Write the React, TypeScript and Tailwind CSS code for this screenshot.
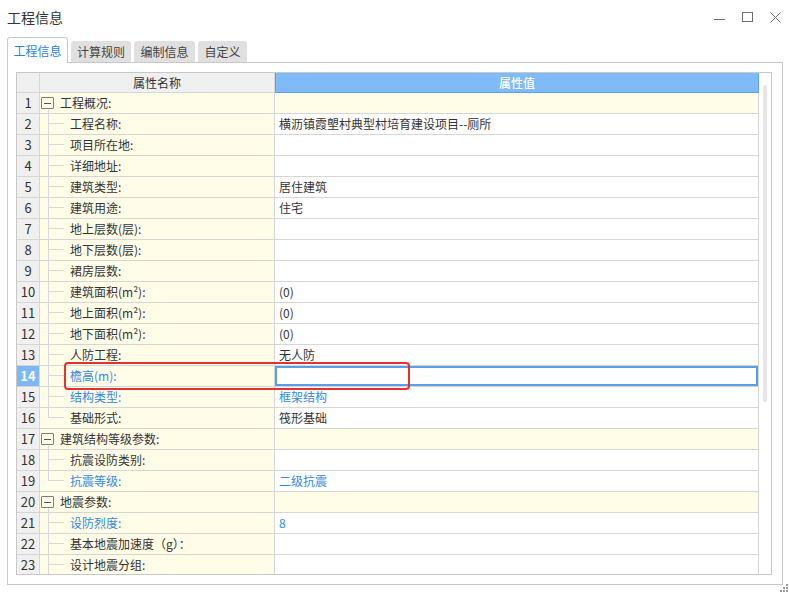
import React from "react";

type Row = {
  n: number;
  name: string;
  value?: string;
  group?: boolean;
  blue?: boolean;
  blueValue?: boolean;
  last?: boolean;
  selected?: boolean;
};

const ROWS: Row[] = [
  { n: 1, name: "工程概况:", group: true },
  { n: 2, name: "工程名称:", value: "横沥镇霞塱村典型村培育建设项目--厕所" },
  { n: 3, name: "项目所在地:" },
  { n: 4, name: "详细地址:" },
  { n: 5, name: "建筑类型:", value: "居住建筑" },
  { n: 6, name: "建筑用途:", value: "住宅" },
  { n: 7, name: "地上层数(层):" },
  { n: 8, name: "地下层数(层):" },
  { n: 9, name: "裙房层数:" },
  { n: 10, name: "建筑面积(m²):", value: "(0)" },
  { n: 11, name: "地上面积(m²):", value: "(0)" },
  { n: 12, name: "地下面积(m²):", value: "(0)" },
  { n: 13, name: "人防工程:", value: "无人防" },
  { n: 14, name: "檐高(m):", blue: true, selected: true },
  { n: 15, name: "结构类型:", value: "框架结构", blue: true, blueValue: true },
  { n: 16, name: "基础形式:", value: "筏形基础", last: true },
  { n: 17, name: "建筑结构等级参数:", group: true },
  { n: 18, name: "抗震设防类别:" },
  { n: 19, name: "抗震等级:", value: "二级抗震", blue: true, blueValue: true, last: true },
  { n: 20, name: "地震参数:", group: true },
  { n: 21, name: "设防烈度:", value: "8", blue: true, blueValue: true },
  { n: 22, name: "基本地震加速度（g）：" },
  { n: 23, name: "设计地震分组:" },
];

const TABS = [
  { label: "工程信息", w: "w-[61px]" },
  { label: "计算规则", w: "w-[60px]" },
  { label: "编制信息", w: "w-[61px]" },
  { label: "自定义", w: "w-[49px]" },
];

function WindowControls() {
  return (
    <div className="flex gap-[17px] pt-[12px] pr-[8px]">
      <svg width="11" height="11" viewBox="0 0 11 11">
        <line x1="0" y1="7.5" x2="11" y2="7.5" stroke="#6f6f6f" strokeWidth="1" />
      </svg>
      <svg width="11" height="11" viewBox="0 0 11 11">
        <rect x="0.5" y="0.5" width="10" height="9" fill="none" stroke="#6f6f6f" strokeWidth="1" />
      </svg>
      <svg width="11" height="11" viewBox="0 0 11 11">
        <path d="M0.5 0.5 L10.5 10.5 M10.5 0.5 L0.5 10.5" stroke="#6f6f6f" strokeWidth="1" />
      </svg>
    </div>
  );
}

function NameCell({ row }: { row: Row }) {
  const color = row.blue ? "text-[#2f8ae5]" : "text-[#333]";
  if (row.group) {
    return (
      <div className="relative w-[235px] shrink-0 border-r border-[#d6d6d6] bg-[#fffce8] flex items-center pl-[20px]">
        <div className="absolute left-[1px] top-[4px] w-[13px] h-[12px] border border-[#7c7c7c] rounded-[1px] flex items-center justify-center">
          <div className="w-[7px] h-px bg-[#555]" />
        </div>
        <div className="absolute left-[8px] top-[16px] bottom-[-1px] w-px bg-[#d8d8d8]" />
        <span className={color}>{row.name}</span>
      </div>
    );
  }
  return (
    <div className="relative w-[235px] shrink-0 border-r border-[#d6d6d6] bg-[#fffce8] flex items-center pl-[30px]">
      {row.last ? (
        <div className="absolute left-[8px] top-0 h-[10px] w-px bg-[#d8d8d8]" />
      ) : (
        <div className="absolute left-[8px] top-0 bottom-[-1px] w-px bg-[#d8d8d8]" />
      )}
      <div className="absolute left-[8px] top-[9px] w-[16px] h-px bg-[#d8d8d8]" />
      <span className={color}>{row.name}</span>
    </div>
  );
}

function GridRow({ row }: { row: Row }) {
  return (
    <div className="flex h-[21px] shrink-0 border-b border-[#d6d6d6]">
      <div
        className={`w-[23px] shrink-0 border-r border-[#d6d6d6] flex items-center justify-center text-[13px] ${
          row.selected ? "bg-[#7db8f3] text-white font-bold" : "bg-[#f0f0f0] text-[#333]"
        }`}
      >
        {row.n}
      </div>
      <NameCell row={row} />
      <div
        className={`flex-1 border-r border-[#d6d6d6] flex items-center pl-[4px] ${
          row.group ? "bg-[#fffce8]" : "bg-white"
        } ${row.blueValue ? "text-[#2f8ae5]" : "text-[#333]"} ${
          row.selected ? "shadow-[inset_0_0_0_2px_#5c9ee6]" : ""
        }`}
      >
        {row.value}
      </div>
    </div>
  );
}

export default function App() {
  return (
    <div
      className="relative w-[789px] h-[593px] bg-white overflow-hidden text-[12px] text-[#333]"
      style={{ fontFamily: '"Noto Sans CJK SC", "Noto Sans", sans-serif' }}
    >
      {/* title bar */}
      <div className="flex items-start justify-between h-[37px]">
        <div className="pl-[7px] pt-[8px] text-[14px] leading-[18px] text-[#333]">工程信息</div>
        <WindowControls />
      </div>

      {/* tabs */}
      <div className="flex items-end gap-[3px] pl-[7px] h-[26px]">
        {TABS.map((t, i) =>
          i === 0 ? (
            <div
              key={t.label}
              className={`${t.w} h-[26px] relative z-10 bg-white border border-b-0 border-[#c8c8c8] rounded-t-[3px] flex items-center justify-center text-[#2f80dc]`}
            >
              {t.label}
            </div>
          ) : (
            <div
              key={t.label}
              className={`${t.w} h-[21px] mb-px bg-[#e0e0e0] rounded-t-[3px] flex items-center justify-center text-[#444]`}
            >
              {t.label}
            </div>
          )
        )}
      </div>

      {/* panel */}
      <div className="-mt-px ml-[7px] w-[776px] h-[523px] border border-[#c8c8c8] pl-[8px] pt-[9px]">
        <div className="relative w-[756px] h-[503px] border border-[#c8c8c8] flex overflow-hidden">
          <div className="w-[742px] flex flex-col">
            {/* header */}
            <div className="flex h-[20px] shrink-0">
              <div className="w-[23px] shrink-0 border-r border-b border-[#d6d6d6] bg-[#f0f0f0]" />
              <div className="w-[235px] shrink-0 border-r border-b border-[#d6d6d6] bg-[#f0f0f0] flex items-center justify-center">
                属性名称
              </div>
              <div className="flex-1 border-x border-b border-[#5fa0ea] bg-[#80bbf7] flex items-center justify-center text-white font-medium">
                属性值
              </div>
            </div>
            {ROWS.map((r) => (
              <GridRow key={r.n} row={r} />
            ))}
          </div>
          {/* scrollbar */}
          <div className="relative flex-1 bg-white">
            <div className="absolute left-[4px] top-[12px] w-[4px] h-[317px] rounded-full bg-[#e6e6e6]" />
          </div>

          {/* highlight */}
          <div className="absolute left-[47px] top-[289px] w-[346px] h-[28px] border-2 border-[#e53030] rounded-[4px]" />
        </div>
      </div>

      {/* resize grip */}
      <svg className="absolute left-[780px] top-[583px]" width="9" height="10" viewBox="0 0 9 10">
        <rect x="6" y="1" width="2" height="2" fill="#9a9a9a" />
        <rect x="3" y="4" width="2" height="2" fill="#9a9a9a" />
        <rect x="6" y="4" width="2" height="2" fill="#9a9a9a" />
        <rect x="0" y="7" width="2" height="2" fill="#9a9a9a" />
        <rect x="3" y="7" width="2" height="2" fill="#9a9a9a" />
        <rect x="6" y="7" width="2" height="2" fill="#9a9a9a" />
      </svg>
    </div>
  );
}
